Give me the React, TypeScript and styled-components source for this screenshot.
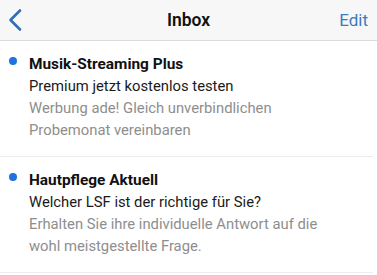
import styled, { createGlobalStyle } from "styled-components"

const GlobalStyle = createGlobalStyle`
  html, body {
    margin: 0;
    padding: 0;
    background: #ffffff;
  }
  body {
    font-family: "Roboto", "Liberation Sans", sans-serif;
    -webkit-font-smoothing: antialiased;
  }
`

type Message = {
  sender: string
  subject: string
  preview: string
  unread: boolean
}

const messages: Message[] = [
  {
    sender: "Musik-Streaming Plus",
    subject: "Premium jetzt kostenlos testen",
    preview: "Werbung ade! Gleich unverbindlichen Probemonat vereinbaren",
    unread: true,
  },
  {
    sender: "Hautpflege Aktuell",
    subject: "Welcher LSF ist der richtige für Sie?",
    preview: "Erhalten Sie ihre individuelle Antwort auf die wohl meistgestellte Frage.",
    unread: true,
  },
]

const Screen = styled.div`
  width: 377px;
  height: 275px;
  overflow: hidden;
  background: #ffffff;
`

const NavBar = styled.header`
  height: 40px;
  display: grid;
  grid-template-columns: 60px 1fr 60px;
  align-items: center;
  background: #f7f7f7;
  border-bottom: 1px solid #dcdcdc;
`

const BackButton = styled.button`
  justify-self: start;
  display: flex;
  align-items: center;
  padding: 0 0 0 7px;
  border: none;
  background: none;
  color: #2f6fb8;
  height: 100%;
`

const Title = styled.h1`
  margin: 0;
  text-align: center;
  font-size: 17.5px;
  font-weight: 600;
  color: #111111;
`

const EditButton = styled.button`
  justify-self: end;
  padding: 0 9px 0 0;
  border: none;
  background: none;
  font-family: inherit;
  font-size: 17px;
  color: #3a7cc0;
`

const List = styled.ul`
  margin: 0;
  padding: 0;
  list-style: none;
`

const Item = styled.li`
  display: grid;
  grid-template-columns: 29px 1fr;
  padding: 12px 44px 15px 0;
  margin-right: 4px;
  border-bottom: 1px solid #ececec;
`

const Dot = styled.span<{ $visible: boolean }>`
  justify-self: center;
  margin: 4px 0 0 -3px;
  width: 8px;
  height: 8px;
  border-radius: 50%;
  background: ${(p) => (p.$visible ? "#1f73e0" : "transparent")};
`

const Body = styled.div`
  display: flex;
  flex-direction: column;
`

const Sender = styled.div`
  font-size: 15.4px;
  font-weight: 700;
  line-height: 22px;
  color: #111111;
`

const Subject = styled.div`
  font-size: 14.8px;
  line-height: 22px;
  color: #1a1a1a;
`

const Preview = styled.div`
  font-size: 14.8px;
  line-height: 22px;
  color: #8e8e8e;
`

const BackChevron = () => (
  <svg width="16" height="24" viewBox="0 0 16 24" fill="none">
    <path d="M13 2.5 L3.5 12 L13 21.5" stroke="currentColor" strokeWidth="2.6" strokeLinecap="round" strokeLinejoin="round" />
  </svg>
)

export default function App() {
  return (
    <Screen>
      <GlobalStyle />
      <NavBar>
        <BackButton aria-label="Back">
          <BackChevron />
        </BackButton>
        <Title>Inbox</Title>
        <EditButton>Edit</EditButton>
      </NavBar>
      <List>
        {messages.map((m) => (
          <Item key={m.sender}>
            <Dot $visible={m.unread} />
            <Body>
              <Sender>{m.sender}</Sender>
              <Subject>{m.subject}</Subject>
              <Preview>{m.preview}</Preview>
            </Body>
          </Item>
        ))}
      </List>
    </Screen>
  )
}
